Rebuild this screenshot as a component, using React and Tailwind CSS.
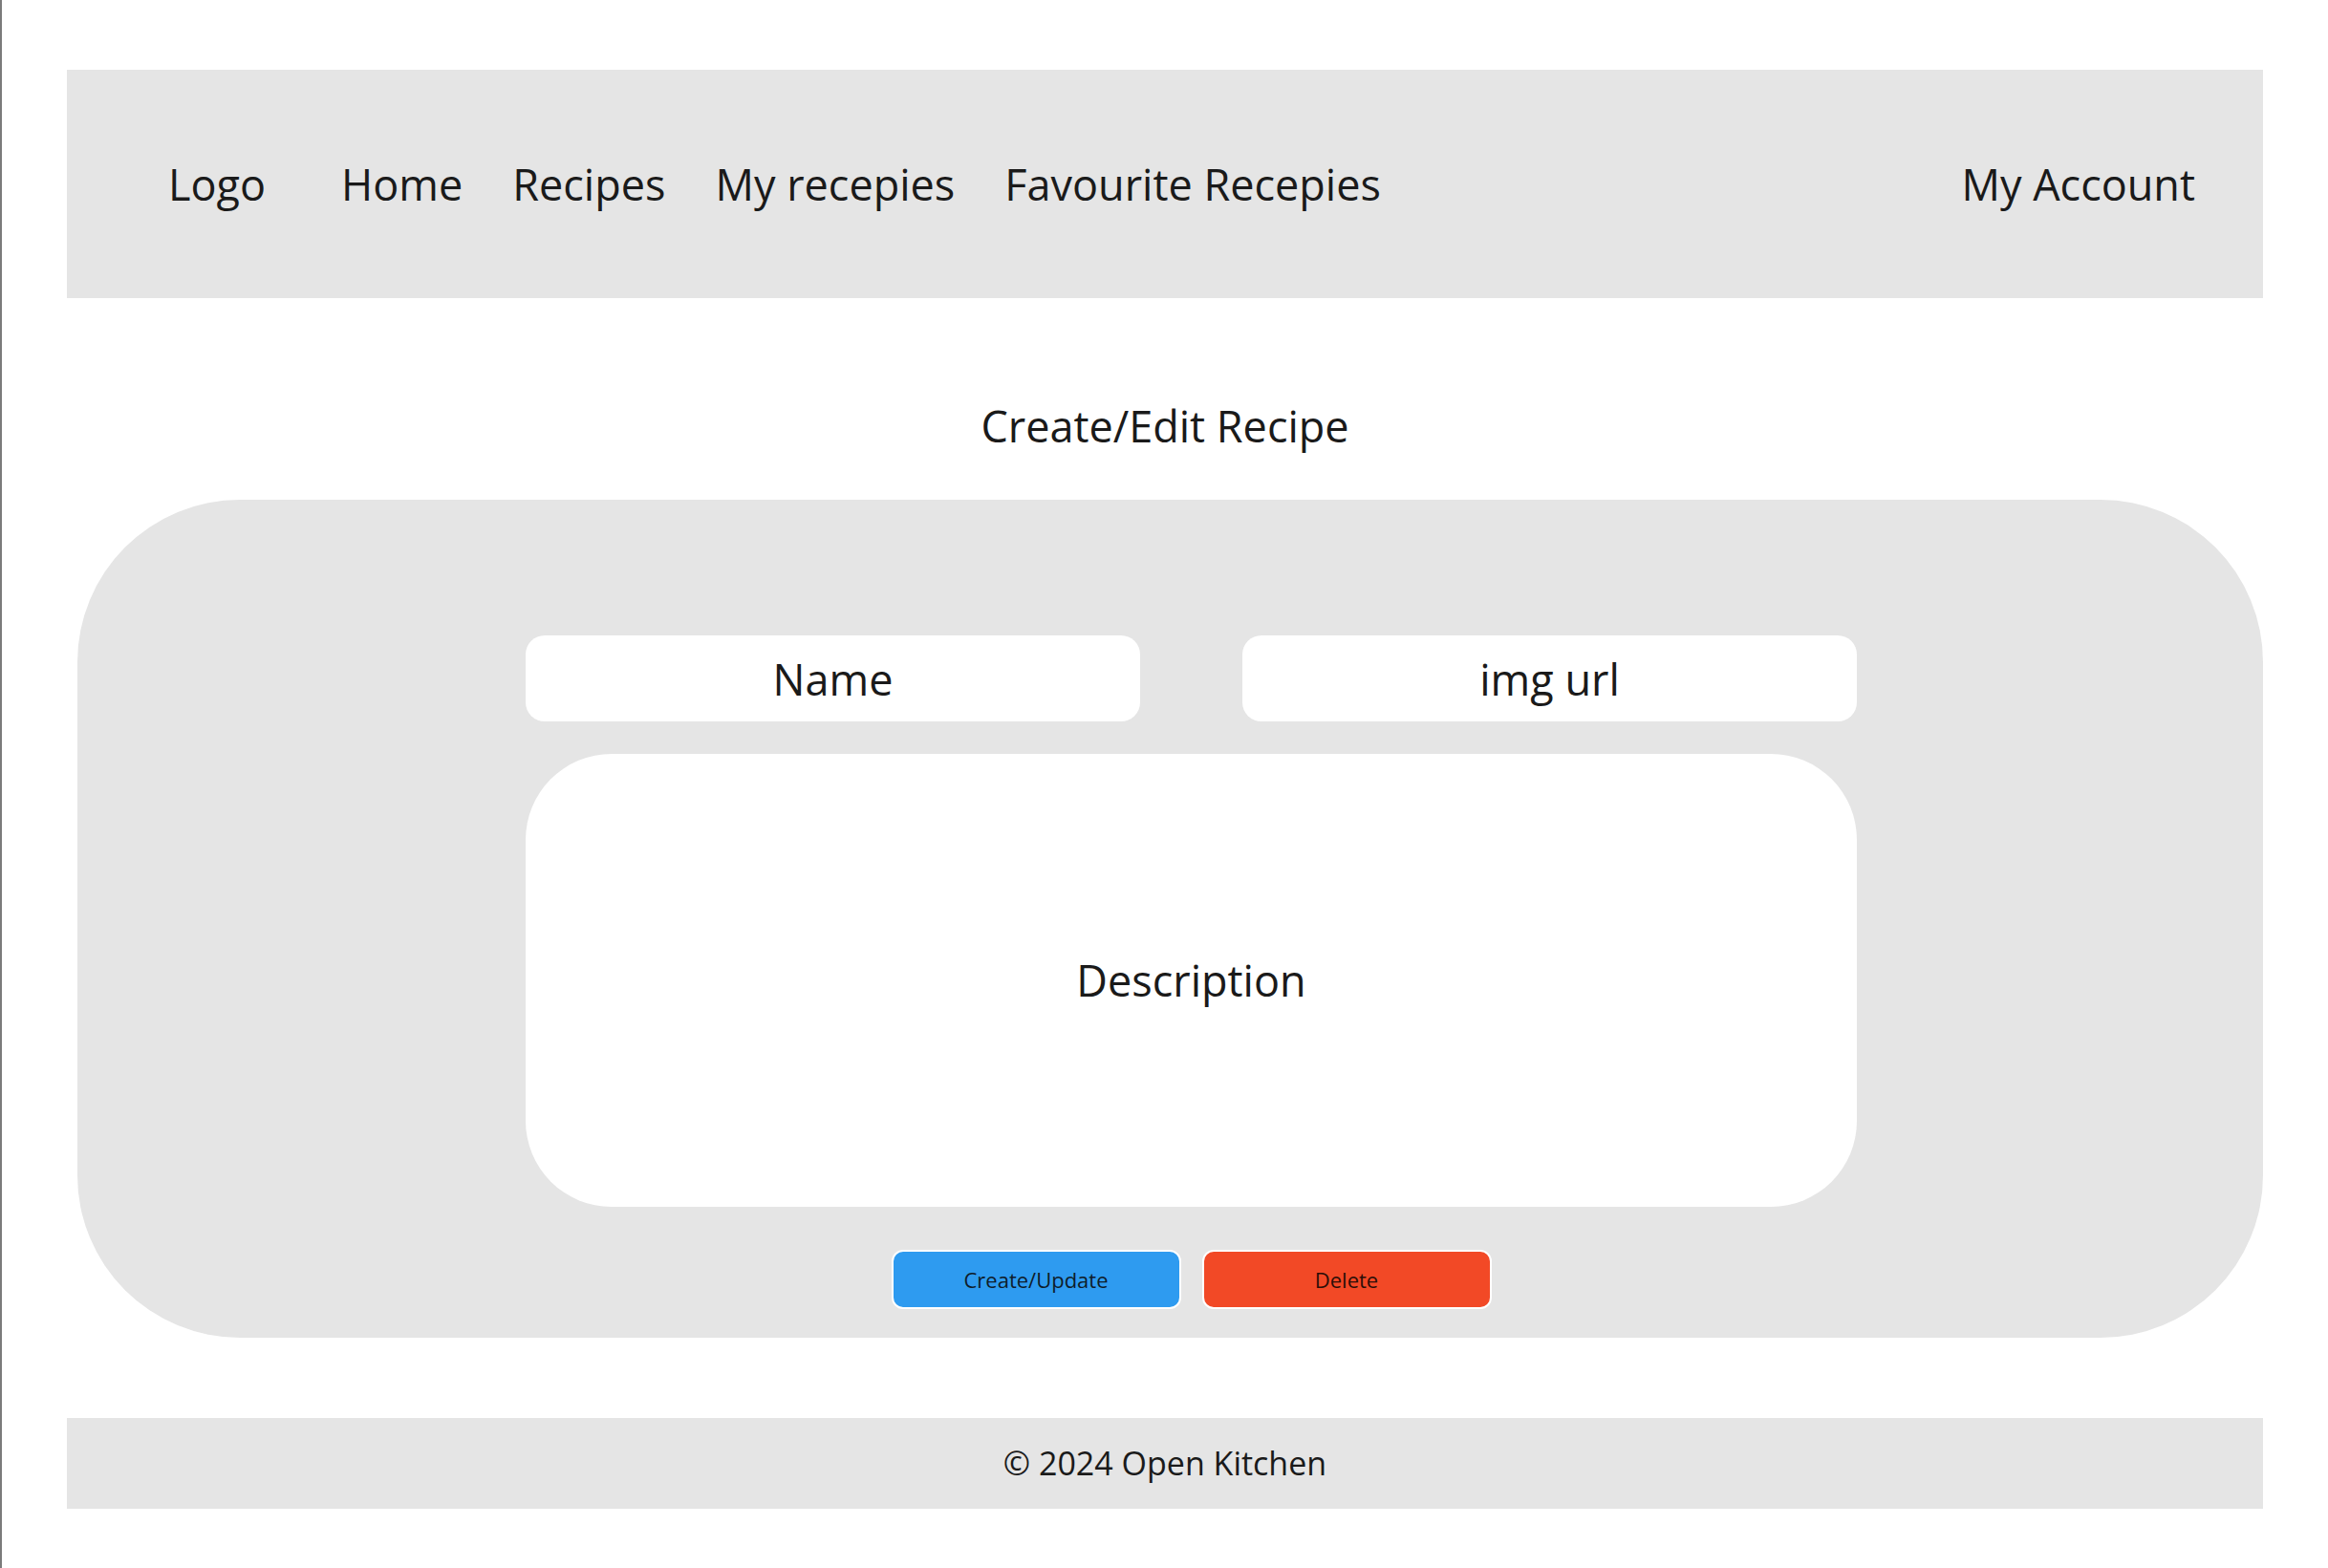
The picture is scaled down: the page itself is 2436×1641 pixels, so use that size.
import React from "react";

const links = ["Home", "Recipes", "My recepies", "Favourite Recepies"];

function Field({ label }) {
  return (
    <div className="w-[643px] h-[90px] bg-white rounded-[20px] flex items-center justify-center text-[45px] leading-none">
      {label}
    </div>
  );
}

export default function App() {
  return (
    <div className="min-h-screen bg-white border-l-2 border-[#7b7b7b] font-['Open_Sans',sans-serif] text-[#1a1a1a]">
      <div className="pl-[68px] pr-[68px] pt-[73px] pb-[62px]">
        {/* nav */}
        <header className="h-[239px] bg-[#e5e5e5] flex items-center pl-[106px] pr-[71px] text-[45px]">
          <span className="mr-[79px]">Logo</span>
          <nav className="flex gap-[52px]">
            {links.map((l) => (
              <a key={l} href="#">
                {l}
              </a>
            ))}
          </nav>
          <a href="#" className="ml-auto">My Account</a>
        </header>

        <h1 className="text-center text-[45px] leading-[63px] pt-[102px] pb-[46px]">
          Create/Edit Recipe
        </h1>

        <section className="ml-[11px] h-[877px] bg-[#e5e5e5] rounded-[170px] pl-[469px] pr-[425px] pt-[142px]">
          <div className="flex gap-[107px]">
            <Field label="Name" />
            <Field label="img url" />
          </div>
          <div className="mt-[34px] h-[474px] bg-white rounded-[90px] flex items-center justify-center text-[45px]">
            Description
          </div>
          <div className="mt-[45px] flex justify-center gap-[22px]">
            <button className="w-[303px] h-[62px] rounded-[12px] border-2 border-white bg-[#2e9bf0] text-[22px] text-[#0e1d2b]">
              Create/Update
            </button>
            <button className="w-[303px] h-[62px] rounded-[12px] border-2 border-white bg-[#f24926] text-[22px] text-[#2b0e08]">
              Delete
            </button>
          </div>
        </section>

        <footer className="mt-[84px] h-[95px] bg-[#e5e5e5] flex items-center justify-center text-[34px]">
          © 2024 Open Kitchen
        </footer>
      </div>
    </div>
  );
}
